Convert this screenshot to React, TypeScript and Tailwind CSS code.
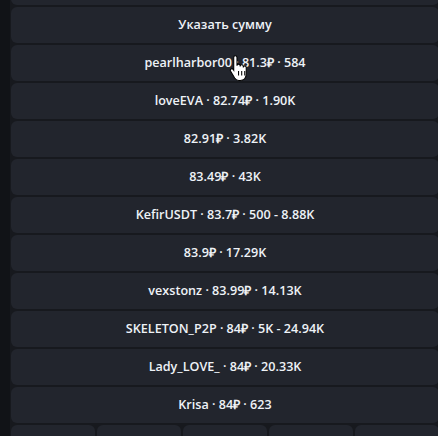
const rows = [
  "Указать сумму",
  "pearlharbor00 · 81.3₽ · 584",
  "loveEVA · 82.74₽ · 1.90K",
  "82.91₽ · 3.82K",
  "83.49₽ · 43K",
  "KefirUSDT · 83.7₽ · 500 - 8.88K",
  "83.9₽ · 17.29K",
  "vexstonz · 83.99₽ · 14.13K",
  "SKELETON_P2P · 84₽ · 5K - 24.94K",
  "Lady_LOVE_ · 84₽ · 20.33K",
  "Krisa · 84₽ · 623",
];

function HandCursor() {
  return (
    <svg
      className="absolute left-[229px] top-[54px]"
      width="21"
      height="27"
      viewBox="0 0 20 24"
      preserveAspectRatio="none"
    >
      <path
        d="M6 1.5c1 0 1.6.7 1.6 1.7v7.3c0-.9.6-1.5 1.5-1.5s1.5.6 1.5 1.5v.6c0-.9.6-1.5 1.5-1.5s1.5.6 1.5 1.5v.8c0-.8.6-1.4 1.4-1.4s1.4.6 1.4 1.5v5.5c0 3.6-2.4 6-5.8 6H9.4c-1.8 0-3-.8-4-2.2L1.6 15.5c-.6-.8-.4-1.8.4-2.2.7-.4 1.5-.2 2 .4l.5.7V3.2c0-1 .6-1.7 1.5-1.7z"
        fill="#fff"
        stroke="#000"
        strokeWidth="1"
      />
      <path d="M9.1 15v4M12.1 15v4M15 15v4" stroke="#000" strokeWidth="1" />
    </svg>
  );
}

export default function App() {
  return (
    <div className="relative w-[438px] h-[436px] overflow-hidden flex bg-[#111317] font-['Open_Sans',sans-serif]">
      <div className="w-[10px] shrink-0 bg-[#111317]" />
      <div className="w-[429px] shrink-0 bg-[#17191e] pl-[1px] -mt-[31px] flex flex-col gap-[2px]">
        <div className="h-[36px] shrink-0 rounded-md bg-[#22252d]" />
        {rows.map((r, i) => (
          <button
            key={i}
            className="h-[36px] shrink-0 rounded-md bg-[#22252d] text-[#eef2f7] text-[12.6px] font-semibold flex items-center justify-center"
          >
            {r}
          </button>
        ))}
        <div className="grid grid-cols-5 gap-[2px]">
          {[0, 1, 2, 3, 4].map((i) => (
            <div key={i} className="h-[36px] rounded-md bg-[#22252d]" />
          ))}
        </div>
      </div>
      <HandCursor />
    </div>
  );
}
